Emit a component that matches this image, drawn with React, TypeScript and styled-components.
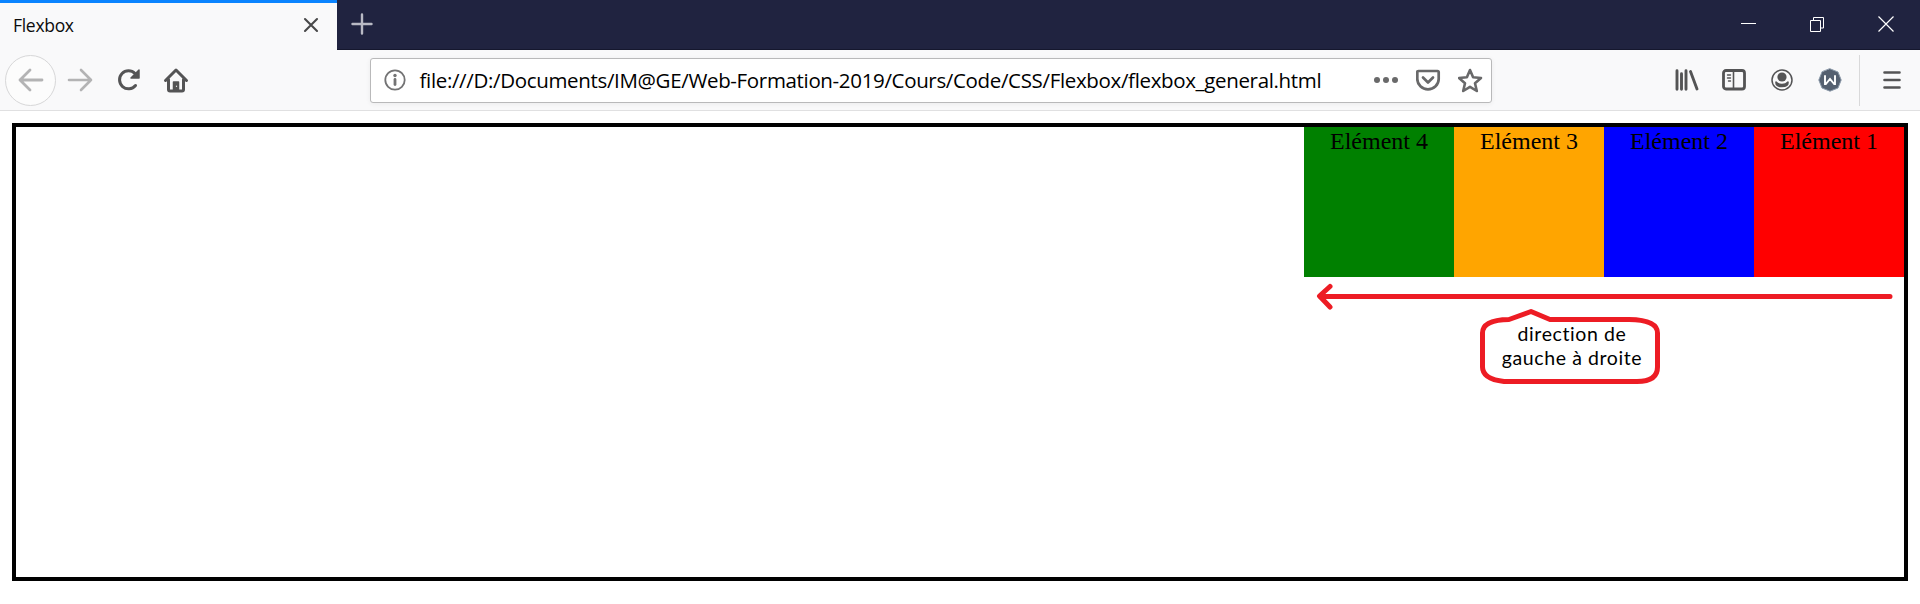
import React from "react";
import styled, { createGlobalStyle } from "styled-components";

const Global = createGlobalStyle`
  * { box-sizing: border-box; }
  body { margin: 0; background: #fff; overflow: hidden; }
  svg { display: block; flex: none; }
`;
const Window = styled.div`
  width: 1920px;
  height: 604px;
  background: #fff;
  font-family: "Open Sans", sans-serif;
`;
const TabBar = styled.header`
  display: flex;
  height: 50px;
  background: #202340;
  box-shadow: inset 0 -1px #15172e;
`;
const Tab = styled.div`
  width: 337px;
  height: 50px;
  border-top: 3px solid #0a84ff;
  background: #f9f9fa;
  display: flex;
  align-items: center;
  justify-content: space-between;
  padding: 0 18px 3px 13px;
`;
const TabTitle = styled.span`
  font-size: 17.5px;
  letter-spacing: -0.3px;
  line-height: 24px;
  color: #0c0c0d;
`;
const WindowControls = styled.div`
  display: flex;
  margin-left: auto;
`;
const Control = styled.div<{ $w?: number }>`
  width: ${(p) => p.$w ?? 69}px;
  height: 48px;
  display: flex;
  align-items: center;
  justify-content: center;
`;
const Toolbar = styled.nav`
  display: flex;
  align-items: center;
  height: 61px;
  background: #f9f9fa;
  border-bottom: 1px solid #e0e0e1;
  padding-left: 5px;
`;
const NavButton = styled.div<{ $w?: number }>`
  width: ${(p) => p.$w ?? 48}px;
  height: 60px;
  display: flex;
  align-items: center;
  justify-content: center;
`;
const BackButton = styled.div`
  width: 51px;
  height: 51px;
  border: 1px solid #d7d7d8;
  border-radius: 50%;
  background: #fcfcfc;
  display: flex;
  align-items: center;
  justify-content: center;
`;
const AddressBar = styled.div`
  width: 1122px;
  height: 45px;
  margin-left: 171px;
  border: 1px solid #b9b9ba;
  border-radius: 3px;
  background: #fff;
  box-shadow: 0 1px 5px rgba(0, 0, 0, 0.06);
  display: flex;
  align-items: center;
  padding: 0 8px 0 13px;
`;
const Url = styled.span`
  flex: 1;
  margin-left: 13.5px;
  font-size: 20.5px;
  letter-spacing: -0.34px;
  line-height: 28px;
  white-space: nowrap;
  color: #000;
`;
const PageActions = styled.div`
  display: flex;
  align-items: center;
  gap: 17px;
`;
const Tools = styled.div`
  display: flex;
  align-items: center;
  margin-left: auto;
`;
const Divider = styled.div`
  width: 1px;
  height: 51px;
  margin: 0 4px 0 5px;
  background: #d9d9da;
`;
const FlexContainer = styled.main`
  margin: 12px;
  height: 458px;
  border: 4px solid #000;
`;
const ItemRow = styled.section`
  display: flex;
  flex-direction: row-reverse;
`;
const Item = styled.div<{ $color: string }>`
  width: 150px;
  height: 150px;
  background: ${(p) => p.$color};
  font-family: "Liberation Serif", serif;
  font-size: 24px;
  line-height: 28px;
  text-align: center;
  color: #000;
`;
const Annotation = styled.div`
  position: relative;
  width: 600px;
  height: 120px;
  margin-left: auto;
`;
const Note = styled.p`
  position: absolute;
  left: 168px;
  top: 45px;
  width: 200px;
  margin: 0;
  text-align: center;
  font-family: Lato, sans-serif;
  font-size: 19.5px;
  letter-spacing: 0.6px;
  line-height: 24px;
  color: #000;
`;

const items = [
  { label: "Elément 1", color: "red" },
  { label: "Elément 2", color: "blue" },
  { label: "Elément 3", color: "orange" },
  { label: "Elément 4", color: "green" },
];

const ink = { fill: "none", stroke: "#545455", strokeLinecap: "round", strokeLinejoin: "round" } as const;

export default function App() {
  return (
    <Window>
      <Global />
      <TabBar>
        <Tab>
          <TabTitle>Flexbox</TabTitle>
          <svg width="16" height="16" viewBox="0 0 16 16" {...ink} stroke="#484849" strokeWidth="2.1">
            <path d="M2 2 14 14M14 2 2 14" />
          </svg>
        </Tab>
        <Control $w={50}>
          <svg width="22" height="22" viewBox="0 0 22 22" {...ink} stroke="#b8b9c4" strokeWidth="2.4">
            <path d="M11 1.5v19M1.5 11h19" />
          </svg>
        </Control>
        <WindowControls>
          <Control $w={68}>
            <svg width="16" height="16" viewBox="0 0 16 16">
              <path d="M1 7.5h15" stroke="#fff" />
            </svg>
          </Control>
          <Control>
            <svg width="15" height="15" viewBox="0 0 15 15" fill="none" stroke="#fff">
              <path d="M1.5 3.5h10v11h-10zM4.5 3.5V.5h10v10.500h-3" />
            </svg>
          </Control>
          <Control>
            <svg width="16" height="16" viewBox="0 0 16 16" stroke="#fff" strokeWidth="1.2">
              <path d="M.5.5l15 15M15.500.5l-15 15" />
            </svg>
          </Control>
        </WindowControls>
      </TabBar>
      <Toolbar>
        <BackButton>
          <svg width="26" height="24" viewBox="0 0 26 24" {...ink} stroke="#b3b3b4" strokeWidth="2.8">
            <path d="M24 12H2M12 2 2 12l10 10" />
          </svg>
        </BackButton>
        <NavButton>
          <svg width="26" height="24" viewBox="0 0 26 24" {...ink} stroke="#b3b3b4" strokeWidth="2.6">
            <path d="M2 12h22M14 2l10 10-10 10" />
          </svg>
        </NavButton>
        <NavButton $w={49}>
          <svg width="24" height="24" viewBox="0 0 24 24" {...ink} strokeWidth="3">
            <path d="M18.5 17.5A9 9 0 1 1 18 5.5" />
            <path d="M22 2v8h-8z" fill="#545455" strokeWidth="1.5" />
          </svg>
        </NavButton>
        <NavButton $w={46}>
          <svg width="26" height="26" viewBox="0 0 26 26" {...ink} strokeWidth="3">
            <path d="M2.5 13.5 13 3l10.5 10.5M5.500 12.500v10q0 1.500 1.500 1.500h12q1.500 0 1.500-1.500v-10" />
            <path d="M10.500 23v-8h5v8z" fill="#545455" strokeWidth="1.5" />
            <path d="M13.500 19v.5" stroke="#ddd" strokeWidth="1.2" />
          </svg>
        </NavButton>
        <AddressBar>
          <svg width="22" height="22" viewBox="0 0 22 22" {...ink} stroke="#737374" strokeWidth="1.8">
            <circle cx="11" cy="11" r="9.7" />
            <path d="M11 10.500v5" strokeWidth="2.8" />
            <circle cx="11" cy="6.5" r="1.7" fill="#737374" stroke="none" />
          </svg>
          <Url>file:///D:/Documents/IM@GE/Web-Formation-2019/Cours/Code/CSS/Flexbox/flexbox_general.html</Url>
          <PageActions>
            <svg width="26" height="8" viewBox="0 0 26 8" fill="#69696a">
              <circle cx="4" cy="4" r="3" />
              <circle cx="13" cy="4" r="3" />
              <circle cx="22" cy="4" r="3" />
            </svg>
            <svg width="25" height="22" viewBox=".5 0 25 22" {...ink} stroke="#69696a" strokeWidth="2.7">
              <path d="M3 2h19q1.200 0 1.200 1.200V10A10.700 10.300 0 0 1 1.800 10V3.200Q1.800 2 3 2z" />
              <path d="m7.500 8.500 5 5 5-5" />
            </svg>
            <svg width="25" height="25" viewBox=".5 0 25 25" {...ink} stroke="#69696a" strokeWidth="2.6">
              <path d="m12.500 2 3.100 7.300 7.900.7-6 5.200 1.800 7.800-6.800-4.100L5.700 23l1.800-7.800L1.500 10l7.900-.7z" />
            </svg>
          </PageActions>
        </AddressBar>
        <Tools>
          <NavButton $w={46}>
            <svg width="24" height="22" viewBox="0 0 24 22" {...ink} strokeWidth="2.9">
              <path d="M2 1.800v18.400M6.500 4.800v15.400M11 1.800v18.400M15.500 2.500l6.500 17.500" />
            </svg>
          </NavButton>
          <NavButton>
            <svg width="24" height="22" viewBox="0 0 24 22" {...ink} strokeWidth="2.8">
              <rect x="1.5" y="1.5" width="21" height="18.5" rx="2.5" />
              <path d="M11.500 2v18" strokeWidth="1.6" />
              <path d="M5.500 6h3M5.500 9h3M6.500 12h2" strokeWidth="1.4" />
            </svg>
          </NavButton>
          <NavButton>
            <svg width="22" height="22" viewBox="0 0 22 22" {...ink} strokeWidth="1.5">
              <circle cx="11" cy="11" r="10" />
              <circle cx="11" cy="8" r="4.6" fill="#545455" stroke="none" />
              <path d="M5 13q2 2.500 6 2.500t6-2.500q.5 4.500-6 4.500T5 13z" fill="#545455" />
            </svg>
          </NavButton>
          <NavButton>
            <svg width="24" height="24" viewBox="0 0 24 24" {...ink} stroke="#fff" strokeWidth="1.9">
              <path d="m12 .8 8 3.200 3.200 8-3.200 8-8 3.200L4 20 .8 12 4 4z" fill="#556070" stroke="#8b99a9" strokeWidth="1" />
              <path d="M7 7.200v8.800h.8l4.200-5 4.200 5h.8V7.200" strokeLinecap="butt" strokeLinejoin="miter" />
            </svg>
          </NavButton>
          <Divider />
          <NavButton $w={56}>
            <svg width="18" height="18" viewBox="0 0 18 18" {...ink} strokeWidth="2.6">
              <path d="M1.500 1.500h15M1.500 9h15M1.500 16.500h15" />
            </svg>
          </NavButton>
        </Tools>
      </Toolbar>
      <FlexContainer>
        <ItemRow>
          {items.map((item) => (
            <Item key={item.label} $color={item.color}>{item.label}</Item>
          ))}
        </ItemRow>
        <Annotation>
          <svg width="600" height="120" viewBox="0 0 600 120" {...ink} stroke="#ed1c24" strokeWidth="5">
            <path d="M586 19.500H16M26 9.500 15.500 19 26 30" />
            <path d="M178.500 56Q178.500 43 205 42.500L227 34.500 246 42.500H325Q353.500 43 353.500 56V90Q353.500 104.500 333 104.500H200Q178.500 102 178.500 90z" />
          </svg>
          <Note>direction de<br />gauche à droite</Note>
        </Annotation>
      </FlexContainer>
    </Window>
  );
}
